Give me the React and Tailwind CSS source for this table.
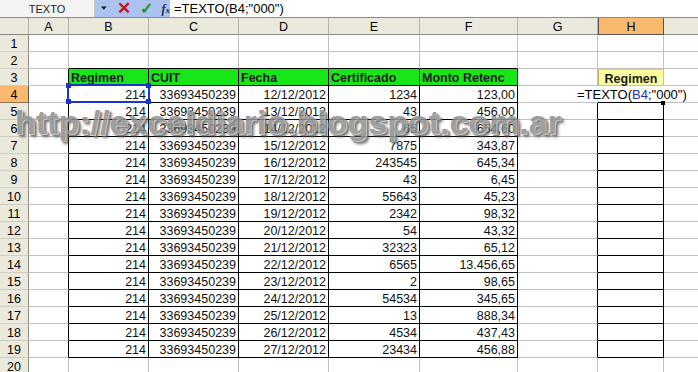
import React from 'react'

/* row header, then columns A..I */
const COLS = ['', 'A', 'B', 'C', 'D', 'E', 'F', 'G', 'H', 'I']

const DATA = [
  ['12/12/2012', '1234', '123,00'],
  ['13/12/2012', '43', '456,00'],
  ['14/12/2012', '65', '654,60'],
  ['15/12/2012', '7875', '343,87'],
  ['16/12/2012', '243545', '645,34'],
  ['17/12/2012', '43', '6,45'],
  ['18/12/2012', '55643', '45,23'],
  ['19/12/2012', '2342', '98,32'],
  ['20/12/2012', '54', '43,32'],
  ['21/12/2012', '32323', '65,12'],
  ['22/12/2012', '6565', '13.456,65'],
  ['23/12/2012', '2', '98,65'],
  ['24/12/2012', '54534', '345,65'],
  ['25/12/2012', '13', '888,34'],
  ['26/12/2012', '4534', '437,43'],
  ['27/12/2012', '23434', '456,88'],
]

const HEADERS = ['Regimen', 'CUIT', 'Fecha', 'Certificado', 'Monto Retenc']

/* cells with a thin black border */
const inBox = (r, c) =>
  (r >= 3 && r <= 19 && c >= 2 && c <= 6) || (r >= 5 && r <= 19 && c === 8)

function cellText(r, c) {
  if (r === 3 && c >= 2 && c <= 6) return { text: HEADERS[c - 2], head: true }
  if (r === 3 && c === 8) return { text: 'Regimen', yellow: true }
  if (r >= 4 && r <= 19) {
    const d = DATA[r - 4]
    if (c === 2) return { text: '214' }
    if (c === 3) return { text: '33693450239' }
    if (c >= 4 && c <= 6) return { text: d[c - 4] }
  }
  return { text: '' }
}

function Cell({ r, c }) {
  const { text, head, yellow } = cellText(r, c)
  const right = inBox(r, c) || inBox(r, c + 1) ? 'border-r-black' : 'border-r-[#c0c0c0]'
  const bottom = inBox(r, c) || inBox(r + 1, c) ? 'border-b-black' : 'border-b-[#c0c0c0]'
  let cls = 'h-[17px] border-r border-b whitespace-nowrap leading-[18px] ' + right + ' ' + bottom
  if (head) cls += ' bg-[#19e619] font-bold text-[#1a1a1a] pl-[2px]'
  else if (yellow) cls += ' bg-[#ffffa0] font-bold text-[#1a1a1a] text-center border-l border-l-[#b0b070] border-t border-t-[#d0d090]'
  else cls += ' text-right pr-[2px] text-[#111]'
  return <div className={cls}>{text}</div>
}

function Triangle() {
  return (
    <svg width="8" height="5" viewBox="0 0 8 5">
      <path d="M0 0h7L3.5 4z" fill="#111" />
    </svg>
  )
}

export default function App() {
  const rows = Array.from({ length: 20 }, (_, i) => i + 1)

  return (
    <div className="relative w-[698px] h-[372px] overflow-hidden bg-white font-['Liberation_Sans',Arial,sans-serif] text-[12.5px] text-black">
      {/* Formula bar */}
      <div className="flex h-[18px] border-b border-b-[#8a8a8a] bg-white">
        <div className="w-[95px] flex items-center justify-center text-[11px] text-[#222] bg-[#f4f4f4] border-r border-r-[#c8c8c8] pt-px">
          TEXTO
        </div>
        <div className="w-[75px] flex items-center bg-[#abc3ee] pl-[6px] gap-[9px]">
          <Triangle />
          <span className="text-[#c21515] font-bold text-[17px] leading-none -mt-[1px]">✕</span>
          <span className="text-[#21962a] font-bold text-[16px] leading-none">✓</span>
          <span className="font-['Liberation_Serif',serif] italic font-bold text-[12px] text-[#1d2a55] leading-none">
            f<span className="text-[9px]">x</span>
          </span>
        </div>
        <div className="flex-1 flex items-center pl-[4px] text-[13px] pt-px">=TEXTO(B4;"000")</div>
      </div>

      {/* Sheet grid */}
      <div className="grid grid-cols-[29px_40px_80px_90px_90px_91px_98px_80px_66px_80px]">
        {COLS.map((col, c) => (
          <div
            key={'h' + c}
            className={
              'h-[17px] border-r border-b text-center leading-[18px] ' +
              (c === 8
                ? 'bg-[#fbb96d] border-r-[#555] border-b-[#555] border-l border-l-[#555]'
                : 'bg-[#ebe8dc] border-r-[#b5b2a6] border-b-[#8d8a80]')
            }
          >
            {col}
          </div>
        ))}
        {rows.map((r) => (
          <React.Fragment key={r}>
            <div
              className={
                'h-[17px] border-r border-b text-center leading-[18px] ' +
                (r === 4
                  ? 'bg-[#fbb96d] border-r-[#555] border-b-[#8d7050]'
                  : 'bg-[#ebe8dc] border-r-[#8d8a80] border-b-[#cfccc0]')
              }
            >
              {r}
            </div>
            {COLS.slice(1).map((_, i) => (
              <Cell key={i} r={r} c={i + 1} />
            ))}
          </React.Fragment>
        ))}
      </div>

      {/* Reference highlight around B4 */}
      <div className="absolute left-[67px] top-[84px] w-[83px] h-[19px] border-2 border-[#1d33c9]" />
      <div className="absolute left-[66px] top-[83px] w-[5px] h-[5px] bg-[#1d33c9]" />
      <div className="absolute left-[146px] top-[83px] w-[5px] h-[5px] bg-[#1d33c9]" />
      <div className="absolute left-[66px] top-[99px] w-[5px] h-[5px] bg-[#1d33c9]" />
      <div className="absolute left-[146px] top-[99px] w-[5px] h-[5px] bg-[#1d33c9]" />

      {/* H4 in edit mode */}
      <div className="absolute left-[574px] top-[86px] w-[114px] h-[16px] bg-white pl-[3px] text-[13px] leading-[17px] whitespace-nowrap">
        =TEXTO(<span className="text-[#2331a8]">B4</span>;"000")
      </div>
      <div className="absolute left-[661px] top-[101px] w-[4px] h-[4px] bg-black" />

      {/* Watermark */}
      <div className="absolute left-[15px] top-[105px] text-[34px] font-bold leading-none whitespace-nowrap text-[#8f8f8f] opacity-85 [text-shadow:1px_1px_0_#bdbdbd,2px_2px_1px_#6a6a6a,3px_3px_3px_#555]">
        http://exceldiario.blogspot.com.ar
      </div>
    </div>
  )
}
